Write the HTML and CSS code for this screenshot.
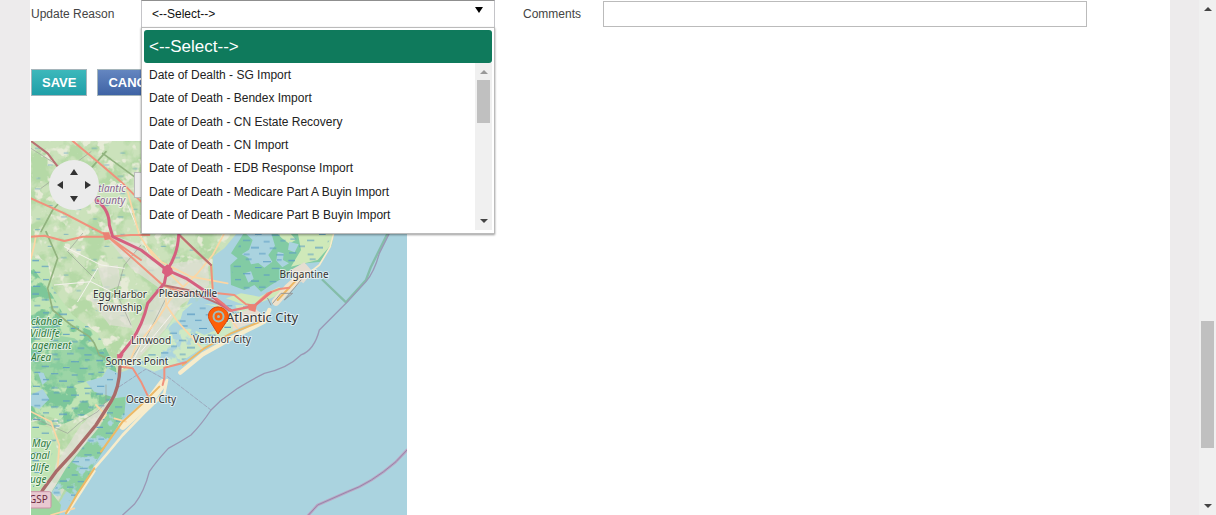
FILE: index.html
```html
<!DOCTYPE html>
<html lang="en">
<head>
<meta charset="utf-8">
<title>Update Reason</title>
<link rel="stylesheet" href="styles.css">
</head>
<body>
<div class="page">
  <main class="content">
    <form class="form">
      <div class="fields">
        <label class="label" for="reason">Update Reason</label>
        <div class="picker">
          <select class="select" id="reason"><option>&lt;--Select--&gt;</option></select>
          <svg class="caret" viewBox="0 0 8 6" aria-hidden="true"><path d="M0 0h8L4 6z"/></svg>
          <div class="menu" role="listbox" aria-label="Update Reason">
            <div class="chosen" role="option" aria-selected="true">&lt;--Select--&gt;</div>
            <div class="menu-body">
              <ul class="options">
                <li role="option">Date of Dealth - SG Import</li>
                <li role="option">Date of Death - Bendex Import</li>
                <li role="option">Date of Death - CN Estate Recovery</li>
                <li role="option">Date of Death - CN Import</li>
                <li role="option">Date of Death - EDB Response Import</li>
                <li role="option">Date of Death - Medicare Part A Buyin Import</li>
                <li role="option">Date of Death - Medicare Part B Buyin Import</li>
              </ul>
              <div class="scrollbar" aria-hidden="true">
                <svg class="arrow faded" viewBox="0 0 8 4"><path d="M0 4h8L4 0z"/></svg>
                <div class="track"><div class="thumb thumb-menu"></div></div>
                <svg class="arrow" viewBox="0 0 8 4"><path d="M0 0h8L4 4z"/></svg>
              </div>
            </div>
          </div>
        </div>
        <label class="label label-comments" for="comments">Comments</label>
        <input class="input" id="comments" type="text">
      </div>
      <div class="actions">
        <button class="button save" type="button">SAVE</button>
        <button class="button cancel" type="button">CANCEL</button>
      </div>
    </form>
    <div class="map">
      <svg class="map-art" viewBox="0 0 376 374" role="img" aria-label="Map of Atlantic City">
        <defs>
          <filter id="woods" x="0" y="0" width="1" height="1" color-interpolation-filters="sRGB">
            <feTurbulence type="fractalNoise" baseFrequency=".018" numOctaves="4" seed="4"/>
            <feColorMatrix values="0 0 0 0 .71  0 0 0 0 .85  0 0 0 0 .65  6 0 0 0 -2.7"/>
            <feComposite in2="SourceGraphic" operator="in"/>
          </filter>
          <filter id="fields" x="0" y="0" width="1" height="1" color-interpolation-filters="sRGB">
            <feTurbulence type="fractalNoise" baseFrequency=".03" numOctaves="3" seed="11"/>
            <feColorMatrix values="0 0 0 0 .9  0 0 0 0 .92  0 0 0 0 .84  0 8 0 0 -4.5"/>
            <feComposite in2="SourceGraphic" operator="in"/>
          </filter>
          <filter id="wet" x="0" y="0" width="1" height="1" color-interpolation-filters="sRGB">
            <feTurbulence type="fractalNoise" baseFrequency=".022" numOctaves="4" seed="8"/>
            <feColorMatrix values="0 0 0 0 .49  0 0 0 0 .78  0 0 0 0 .6  9 0 0 0 -4.1"/>
            <feComposite in2="SourceGraphic" operator="in"/>
          </filter>
          <filter id="pools" x="0" y="0" width="1" height="1" color-interpolation-filters="sRGB">
            <feTurbulence type="fractalNoise" baseFrequency=".022" numOctaves="4" seed="21"/>
            <feColorMatrix values="0 0 0 0 .67  0 0 0 0 .83  0 0 0 0 .87  0 11 0 0 -5.9"/>
            <feComposite in2="SourceGraphic" operator="in"/>
          </filter>
          <pattern id="reeds" width="192" height="100" patternUnits="userSpaceOnUse">
            <path d="M4 7h20M68 3h18M120 10h24M162 5h14M32 24h22M96 28h20M146 30h24M10 42h18M60 46h22M122 50h18M172 47h16M36 64h18M84 68h24M140 70h20M6 84h22M62 88h18M108 86h20M160 90h22" stroke="#5a9cc4" stroke-width="3"/>
          </pattern>
          <pattern id="few-reeds" width="170" height="122" patternUnits="userSpaceOnUse">
            <path d="M12 14h16M98 28h14M50 64h15M136 75h14M16 104h12M90 98h17" stroke="#5d9fc0" stroke-width="2"/>
          </pattern>
        </defs>
        <rect width="376" height="374" fill="#aad3df"/>
        <g transform="scale(.33333) translate(0 252)" fill="none" stroke-linejoin="round" stroke-linecap="round">
          <g id="mainland">
            <path id="land" fill="#cbe2bb" d="M0-252H650L620 22 580 70 545 95 548 190 480 215 455 265 410 300 390 350 330 405 290 435 262 445 258 520 242 600 190 690 120 760 60 870H0z"/>
            <path filter="url(#woods)" fill="#000" d="M0-252H650L620 22 545 95 548 190 410 300 262 445 242 600 60 870H0z"/>
            <path filter="url(#fields)" fill="#000" d="M0-252H650L620 22 545 95 548 190 410 300 262 445 242 600 60 870H0z"/>
            <path fill="url(#few-reeds)" d="M0-252H340V20H580L400 250 240 300 60 130 0 90z"/>
          </g>
          <path fill="#e0ded6" opacity=".7" d="M215 20 330 60 400 120 530 100 535 180 450 240 405 310 310 415 270 400 350 245 385 190 300 130zM200 130l60-10 10 60-50 20zM175 220l110 20 20 70-70-10zM60 870 150 700 230 560 250 500 225 530 150 600 60 740 0 830V870z"/>
          <g id="west-marsh">
            <path fill="#c0e4b4" d="M0 95 50 110 65 190 125 270 200 325 232 385 255 430 256 500 230 530 160 570 90 585 0 560z"/>
            <path fill="#c0e4b4" d="M0 590 60 610 80 680 70 740 0 830z"/>
            <path filter="url(#wet)" fill="#000" d="M0 120 60 205 110 290 200 325 232 385 255 430 256 500 230 530 160 570 90 600 0 600z"/>
            <path fill="#8dcea0" opacity=".7" d="M70 330 130 340 210 400 215 450 150 475 100 490 20 470 0 430 0 410 60 390z"/>
            <path fill="#aad3df" d="M165 470 215 455 230 430 262 445 256 520 225 510 190 500zM0 510l35-18 20 30-30 30-25-10zM20 440l18 4 10 25-14 10z"/>
            <path fill="url(#reeds)" d="M0 95 50 110 65 190 125 270 200 325 232 385 255 430 256 500 230 550 160 580 90 590 60 700 0 800z"/>
          </g>
          <g id="middle-marsh">
            <path fill="#cde9c4" d="M400 320 450 250 480 235 570 240 640 240 690 270 640 300 520 365 450 410 370 440 320 420z"/>
            <path filter="url(#pools)" fill="#000" d="M400 320 450 250 570 240 640 240 640 300 520 365 450 410 320 420z"/>
            <path fill="#aad3df" d="M455 260 490 230 555 245 555 315 520 330 480 310 440 315zM550 110 600 110 605 190 550 195z"/>
            <path fill="url(#reeds)" d="M400 320 450 250 570 240 690 240 640 300 520 365 450 410 320 430z"/>
          </g>
          <g id="north-marsh">
            <path fill="#82cba4" d="M640 22 665 45 690 22H910L902 62 870 110 825 115 805 128 770 150 720 180 690 200 670 180 640 195 600 180 598 120 620 100 600 85z"/>
            <path fill="#cfe9b9" d="M800 22H908L898 62 860 105 780 125 810 75zM735 22h40l20 22-20 12-22-16zM630 205l55 10 60-30 10 20-60 25-55 10-55-20z"/>
            <path fill="#aad3df" d="M632 88l22-14 12-32 24-20 30 0 12 40-20 28 12 20-24 18-18-14-22 4-8-20zM740 80l18 5-2 20 18 10-20 12-18-20zM775 50l28 8-12 24-20-8zM640 145l20-6 8 22-16 12z"/>
            <path fill="url(#reeds)" d="M640 22H910L860 105 700 200 610 190 600 120z"/>
          </g>
          <g id="south-marsh">
            <path fill="#8bcfa0" d="M250 520 285 515 280 570 250 620 215 680 190 718 165 770 130 815 95 790 60 805 105 730 160 660 210 600z"/>
            <path filter="url(#pools)" fill="#000" d="M250 520 280 570 190 718 130 840 60 805 160 660z"/>
            <path fill="url(#reeds)" d="M250 520 285 515 280 570 190 718 130 830 60 810 110 730 160 660z"/>
            <path fill="#9dd6a0" d="M0 805 60 800 90 840 85 870H0z"/>
          </g>
          <g id="beaches" stroke="#f7eccb">
            <path stroke-width="13" d="M448 443 515 388 610 335 700 290 715 255"/>
            <path stroke-width="24" stroke="#efe2cb" d="M735 230 770 190 820 145"/>
            <path stroke-width="5" d="M820 155 865 120 898 65 908 25"/>
            <path stroke-width="24" d="M395 475 350 535 275 602"/>
            <path stroke-width="8" d="M408 465 400 505 338 565 275 630 225 690 192 728M190 738 150 800 110 862"/>
            <path fill="#e5ddd0" stroke="none" d="M770 140l50-28 25 28-28 35zM605 270l65-22 35 30-100 38z"/>
          </g>
          <g id="boundaries">
            <path stroke="#84bda9" stroke-width="7" d="M875 165 945 232 1005 165 1020 125 1070 25"/>
            <path stroke="#9b98b5" stroke-width="4" d="M1075 25 1045 85Q1030 140 1005 170L945 235 865 315Q850 375 810 390 770 430 700 445 660 465 620 490L568 528 540 555Q510 600 480 630 450 650 412 670 375 710 355 740 340 800 310 838L275 870"/>
            <path stroke="#bca3c2" stroke-width="8" d="M1128 675 1095 710Q1020 775 950 800L860 840 828 875"/>
            <path stroke="#9589ac" stroke-width="3" d="M1128 675 1095 710Q1020 775 950 800L860 840 828 875"/>
            <path stroke="#9ca9bd" stroke-width="3" stroke-dasharray="12 5" d="M410 455 540 555M265 485 345 432 400 462"/>
            <path stroke="#91b37e" stroke-width="5" d="M45 20 80 100 50 190 65 255 120 300 175 335 190 355 205 390 228 400M30 20 65-45 180-170 225-220M215-215 330-130"/>
            <path stroke="#9aa197" stroke-width="2" d="M10 580 110 625 150 590 200 560 225 530 225 480M330 60 280 120 260 190 225 240M155 25 110 80 190 160M250 190 300 300M420 190 350 330 280 430M30-110 180-220M0-230 110-160"/>
          </g>
          <g id="local-roads">
            <path stroke="#f5f3ee" stroke-width="3" d="M100 65 210 120 280 130M70 180 180 170 260 210M360 300 310 400M420 270 330 380M200 130 140 230M290-60 350 80"/>
            <path stroke="#fcd6a4" stroke-width="5" d="M290-100 325 30 370 100 410 140 455 185M340 55 390 110 480 155 590 175M580 25 545 90 500 145 420 220 375 290 315 365 290 425M405 180 405 240 440 290 515 372M535 200 570 250 620 310M0 560 60 590 85 660 80 730M195 540 225 570 160 640 80 740M0 100 10 60 15 30M250 580 285 590M60 870 130 850"/>
            <path stroke="#edb865" stroke-width="6" d="M455 420 520 370 600 325 700 285M385 485 330 540 275 590 210 680M190 730 140 805 105 865M740 225 815 145"/>
            <path stroke="#999" stroke-width="3" d="M725 235 750 205 785 205 760 225 810 165M375 195 450 210 550 220 610 265M720 240 710 220"/>
            <path stroke="#f0917c" stroke-width="6" d="M0-80 100-35 225 30 300 95 395 180 460 205M0 35 40 32 100 48 155 35 225 35 300 30 355 30M125-252 200-190 270-130 330-70M445 30 490 75 540 120 545 190M560 205 610 210 645 238 670 242M670 242 710 205 745 192 775 188M270 425 305 430 330 470 350 512M400 430 400 460 395 480M400 428 465 412M225 30 330 105"/>
            <path stroke="#b97173" stroke-width="6" d="M0-252 50-215 80-175M445 30 540 120M395 180 470 195 560 235 600 255"/>
          </g>
          <g id="highways">
            <path stroke="#d4607f" stroke-width="9" d="M180-85Q235-55 235 0L245 35 330 75 408 135 465 160 540 210 575 240 595 255M443 30Q440 90 408 135L400 175 350 235Q335 300 300 350L268 390"/>
            <path stroke="#e97878" stroke-width="7" d="M540 208 580 240 600 258M600 257 670 243 720 202"/>
            <path stroke="#a96b69" stroke-width="10" d="M267 425Q265 490 240 530L195 600 130 680 75 740 35 795 15 830"/>
            <path fill="#d9607f" stroke="none" d="M395 130l14-12 14 12 5 14-18 12-17-13zM258 388h20l-7 14h-12z"/>
            <path fill="#ea8174" stroke="none" d="M650 238h28l-5 23-20-6zM215 22l20 0 4 20-18 4z"/>
          </g>
          <rect x="-22" y="800" width="82" height="49" rx="5" fill="#e9c9d1" stroke="#cc91a8" stroke-width="3"/>
        </g>
        <g class="place">
          <text x="273" y="137">Brigantine</text>
          <text x="157" y="156">Pleasantville</text>
          <text x="89" y="157">Egg Harbor</text>
          <text x="89" y="170">Township</text>
          <text x="120" y="203">Linwood</text>
          <text x="191" y="202">Ventnor City</text>
          <text x="106" y="224">Somers Point</text>
          <text x="120" y="262">Ocean City</text>
          <text class="city" x="231" y="181">Atlantic City</text>
        </g>
        <g class="county"><text x="67" y="51">tlantic</text><text x="63" y="63">County</text></g>
        <g class="refuge">
          <text x="0" y="184">ckahoe</text><text x="-1" y="196">Vildlife</text><text x="1" y="208">agement</text><text x="0" y="220">Area</text>
          <text x="1" y="306">May</text><text x="-1" y="318">onal</text><text x="-1" y="330">dlife</text><text x="-1" y="342">uge</text>
        </g>
        <text class="shield" x="-2" y="362">GSP</text>
        <path fill="#fd5f09" stroke="#d9480b" d="M187 193 179 180c-4-6 0-14 8-14s13 8 9 14z"/>
        <circle cx="187.500" cy="175.500" r="5" fill="none" stroke="#9fbfbd" stroke-width="2"/>
        <circle cx="187.500" cy="175.500" r="1.500" fill="#9fbfbd"/>
      </svg>
      <button class="zoom" type="button" aria-label="Zoom out"></button>
      <button class="pan" type="button" aria-label="Pan map">
        <svg class="pan-art" viewBox="0 0 50 50" aria-hidden="true"><path d="M25 9l4 6h-8zM25 42l4-6h-8zM8 25l6-4v8zM42 25l-6-4v8z"/></svg>
      </button>
    </div>
  </main>
  <div class="scrollbar page-scroll" aria-hidden="true">
    <svg class="arrow" viewBox="0 0 8 4"><path d="M0 4h8L4 0z"/></svg>
    <div class="track">
      <div class="before"></div>
      <div class="thumb thumb-page"></div>
      <div class="after"></div>
    </div>
    <svg class="arrow" viewBox="0 0 8 4"><path d="M0 0h8L4 4z"/></svg>
  </div>
</div>
</body>
</html>
```
FILE: styles.css
```css
* { box-sizing: border-box; }

body {
  margin: 0;
  background: #edebec;
  color: #444;
  font: 12px/16px "Liberation Sans", Arial, sans-serif;
}

.page {
  display: flex;
  height: 100vh;
  overflow: hidden;
}

.content {
  flex: 1;
  min-width: 0;
  margin: 0 29px 0 30px;
  padding-left: 1px;
  background: #fff;
}

.fields {
  display: grid;
  grid-template-columns: 110px 354px 108px minmax(0, 1fr);
  align-items: center;
  padding-right: 83px;
}

.label-comments { padding-left: 28px; }

.picker { position: relative; }

.select {
  display: block;
  width: 100%;
  height: 28px;
  padding: 0 10px;
  appearance: none;
  border: 1px solid #c4c4c8;
  border-top-color: #8f8f8f;
  border-radius: 0;
  background: #fff;
  color: #111;
  font: inherit;
}

.caret {
  position: absolute;
  top: 7px;
  right: 12px;
  width: 8px;
  height: 6px;
}

.input {
  height: 26px;
  padding: 0 6px;
  border: 1px solid #bbb;
  background: #fff;
  font: inherit;
}

.menu {
  position: absolute;
  z-index: 2;
  top: 27px;
  left: 0;
  width: 100%;
  padding: 2px 2px 3px;
  border: 1px solid #bbb;
  background: #fff;
  box-shadow: 0 1px 2px rgba(0, 0, 0, .4);
}

.chosen {
  padding: 0 5px;
  border-radius: 3px;
  background: #0f7a5c;
  color: #fff;
  font-size: 17px;
  line-height: 33px;
}

.menu-body {
  display: flex;
  height: 167px;
}

.options {
  display: flex;
  flex: 1;
  flex-direction: column;
  margin: 0;
  padding: 0 5px 3px;
  list-style: none;
  color: #222;
}

.options li {
  display: flex;
  flex: 1;
  align-items: center;
}

.scrollbar {
  display: flex;
  flex-direction: column;
  align-items: center;
  width: 17px;
  padding: 7px 0;
  background: #f0f0f0;
}

.arrow {
  width: 8px;
  height: 4px;
  fill: #444;
}

.faded { fill: #999; }

.track {
  display: flex;
  flex: 1;
  flex-direction: column;
  width: 13px;
  padding: 6px 0;
}

.thumb { background: #c0c0c0; }
.thumb-menu { height: 32%; }
.before { flex: 304; }
.thumb-page { flex: 127; }
.after { flex: 50; }

.actions {
  display: flex;
  gap: 10px;
  padding: 41px 0 45px;
}

.button {
  height: 27px;
  padding: 0 10px;
  border: 1px solid #a5b5bb;
  color: #fff;
  font: bold 13px/16px "Liberation Sans", Arial, sans-serif;
}

.save { background: linear-gradient(#3db8bb, #1f9fa8); }
.cancel { background: linear-gradient(#6486c0, #3f63a5); }

.map {
  position: relative;
  width: 376px;
  overflow: hidden;
}

.map-art {
  display: block;
  width: 100%;
}

.map-art text {
  paint-order: stroke;
  stroke: rgba(255, 255, 255, .6);
  stroke-width: 2px;
  stroke-linejoin: round;
  font-family: "Noto Sans", sans-serif;
}

.place {
  fill: #333;
  font-size: 10px;
  text-anchor: middle;
}

.map-art .city { font-size: 13px; }

.county {
  fill: #8a6590;
  font-size: 10px;
  font-style: italic;
}

.refuge {
  fill: #2f7a3c;
  font-size: 10px;
  font-style: italic;
}

.map-art .shield {
  fill: #6b2b40;
  stroke: none;
  font-size: 10px;
}

.pan {
  position: absolute;
  top: 19px;
  left: 18px;
  width: 50px;
  height: 50px;
  padding: 0;
  border: 0;
  border-radius: 50%;
  background: #ebebeb;
}

.pan-art {
  display: block;
  fill: #333;
}

.zoom {
  position: absolute;
  top: 31px;
  left: 103px;
  width: 26px;
  height: 26px;
  border: 1px solid #bbb;
  background: #ebebeb;
}
```
